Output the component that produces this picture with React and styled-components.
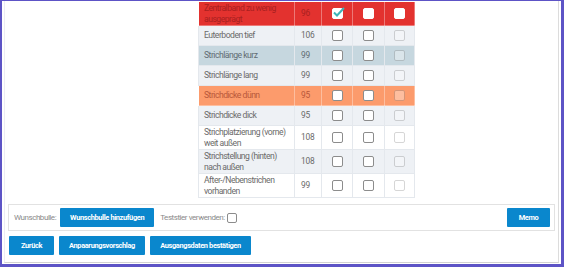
import React from 'react';
import styled, { createGlobalStyle } from 'styled-components';

const GlobalStyle = createGlobalStyle`
  html, body {
    margin: 0;
    padding: 0;
    background: #fff;
  }
  body {
    font-family: "Roboto", "Liberation Sans", sans-serif;
  }
`;

const Frame = styled.div`
  width: 564px;
  height: 267px;
  box-sizing: border-box;
  border-style: solid;
  border-color: #5d54c6;
  border-width: 1px 3px 3px 2px;
  overflow: hidden;
  background: #fff;
`;

const Card = styled.div`
  margin: 0 2px 0 2px;
  height: 262px;
  box-sizing: border-box;
  border-left: 1px solid #ececf4;
  border-right: 1px solid #dcdcdc;
  border-bottom: 1px solid #d2d2d2;
  padding: 0 3px 0 3px;
  display: flex;
  flex-direction: column;
`;

const TableWrap = styled.div`
  padding-left: 190px;
`;

const Table = styled.table`
  border-collapse: collapse;
  table-layout: fixed;
  width: 216px;
  color: #6a6a6a;
`;

const rowColors = {
  red: { bg: '#e3322f', fg: '#a9201f' },
  blue: { bg: '#c6d7df', fg: '#5f6b72' },
  orange: { bg: '#fc9b6c', fg: '#b8573a' },
  grey: { bg: '#eef1f5', fg: '#6a6a6a' },
  white: { bg: '#ffffff', fg: '#6a6a6a' },
};

const Row = styled.tr`
  background: ${({ $tone }) => rowColors[$tone].bg};
  color: ${({ $tone }) => rowColors[$tone].fg};
`;

const Cell = styled.td`
  border: 1px solid ${({ $tone }) => ($tone === 'red' || $tone === 'orange' ? 'rgba(255,255,255,0.35)' : '#e4e8ed')};
  padding: ${({ $num }) => ($num ? '0 4px 0 6px' : '0 5px')};
  height: ${({ $tall }) => ($tall ? '23px' : '19px')};
  line-height: 11px;
  vertical-align: middle;
  white-space: nowrap;
  text-align: ${({ $center }) => ($center ? 'center' : 'left')};
  font-size: ${({ $num }) => ($num ? '8.4px' : '8.6px')};
  letter-spacing: ${({ $num }) => ($num ? '-0.2px' : '-0.5px')};
`;

const Box = styled.span`
  position: relative;
  display: inline-block;
  vertical-align: middle;
  width: 11px;
  height: 11px;
  box-sizing: border-box;
  border: 1px solid ${({ $light }) => ($light ? '#ffffff' : '#8c8c8c')};
  border-radius: 2px;
  background: #fff;
  opacity: ${({ $disabled }) => ($disabled ? 0.35 : 1)};
`;

const Tick = styled.svg`
  position: absolute;
  left: -1px;
  top: -3px;
`;

const Checkbox = ({ checked, disabled, light }) => (
  <Box $disabled={disabled} $light={light}>
    {checked && (
      <Tick width="13" height="12" viewBox="0 0 13 12">
        <polyline points="2,6.5 5,9.5 12,2" fill="none" stroke="#3fb3b7" strokeWidth="2" />
      </Tick>
    )}
  </Box>
);

const Panel = styled.div`
  margin-top: 6px;
  border: 1px solid #e2e2e2;
  height: 27px;
  box-sizing: border-box;
  padding: 0 4px 0 5px;
  display: flex;
  align-items: center;
  gap: 4px;
`;

const Label = styled.span`
  font-size: 8px;
  letter-spacing: -0.45px;
  color: #8a8a8a;
  white-space: nowrap;
  margin-left: ${({ $gap }) => $gap || 0}px;
`;

const Button = styled.button`
  font-family: "Roboto", "Liberation Sans", sans-serif;
  font-size: 7.4px;
  letter-spacing: -0.35px;
  font-weight: bold;
  color: #fff;
  background: #0a87cd;
  border: none;
  border-radius: 1px;
  height: 19px;
  width: ${({ $w }) => $w}px;
  padding: 0;
  white-space: nowrap;
  cursor: pointer;
`;

const Spacer = styled.div`
  flex: 1;
`;

const SmallBox = styled.span`
  display: inline-block;
  width: 10px;
  height: 10px;
  box-sizing: border-box;
  border: 1px solid #8c8c8c;
  border-radius: 2px;
  margin-left: -2px;
`;

const Actions = styled.div`
  margin-top: 5px;
  display: flex;
  gap: 5px;
  padding-left: 1px;
`;

const rows = [
  { label: ['Zentralband zu wenig', 'ausgeprägt'], value: 96, tone: 'red', checked: true, light: true },
  { label: ['Euterboden tief'], value: 106, tone: 'grey' },
  { label: ['Strichlänge kurz'], value: 99, tone: 'blue' },
  { label: ['Strichlänge lang'], value: 99, tone: 'grey' },
  { label: ['Strichdicke dünn'], value: 95, tone: 'orange' },
  { label: ['Strichdicke dick'], value: 95, tone: 'grey' },
  { label: ['Strichplatzierung (vorne)', 'weit außen'], value: 108, tone: 'white' },
  { label: ['Strichstellung (hinten)', 'nach außen'], value: 108, tone: 'grey' },
  { label: ['After-/Nebenstrichen', 'vorhanden'], value: 99, tone: 'white' },
];

export default function App() {
  return (
    <>
      <GlobalStyle />
      <Frame>
        <Card>
          <TableWrap>
            <Table>
              <colgroup>
                <col style={{ width: 96 }} />
                <col style={{ width: 27 }} />
                <col style={{ width: 31 }} />
                <col style={{ width: 32 }} />
                <col style={{ width: 30 }} />
              </colgroup>
              <tbody>
                {rows.map((r) => {
                  const tall = r.label.length > 1;
                  return (
                    <Row key={r.label[0]} $tone={r.tone}>
                      <Cell $tone={r.tone} $tall={tall}>
                        {r.label.map((line, i) => (
                          <React.Fragment key={line}>
                            {i > 0 && <br />}
                            {line}
                          </React.Fragment>
                        ))}
                      </Cell>
                      <Cell $tone={r.tone} $tall={tall} $num>{r.value}</Cell>
                      <Cell $tone={r.tone} $tall={tall} $center>
                        <Checkbox checked={r.checked} light={r.light} />
                      </Cell>
                      <Cell $tone={r.tone} $tall={tall} $center>
                        <Checkbox light={r.light} />
                      </Cell>
                      <Cell $tone={r.tone} $tall={tall} $center>
                        <Checkbox light={r.light} disabled={!r.light} />
                      </Cell>
                    </Row>
                  );
                })}
              </tbody>
            </Table>
          </TableWrap>
          <Panel>
            <Label>Wunschbulle:</Label>
            <Button $w={94}>Wunschbulle hinzufügen</Button>
            <Label $gap={2}>Teststier verwenden:</Label>
            <SmallBox />
            <Spacer />
            <Button $w={43}>Memo</Button>
          </Panel>
          <Actions>
            <Button $w={45}>Zurück</Button>
            <Button $w={86}>Anpaarungsvorschlag</Button>
            <Button $w={101}>Ausgangsdaten bestätigen</Button>
          </Actions>
        </Card>
      </Frame>
    </>
  );
}
